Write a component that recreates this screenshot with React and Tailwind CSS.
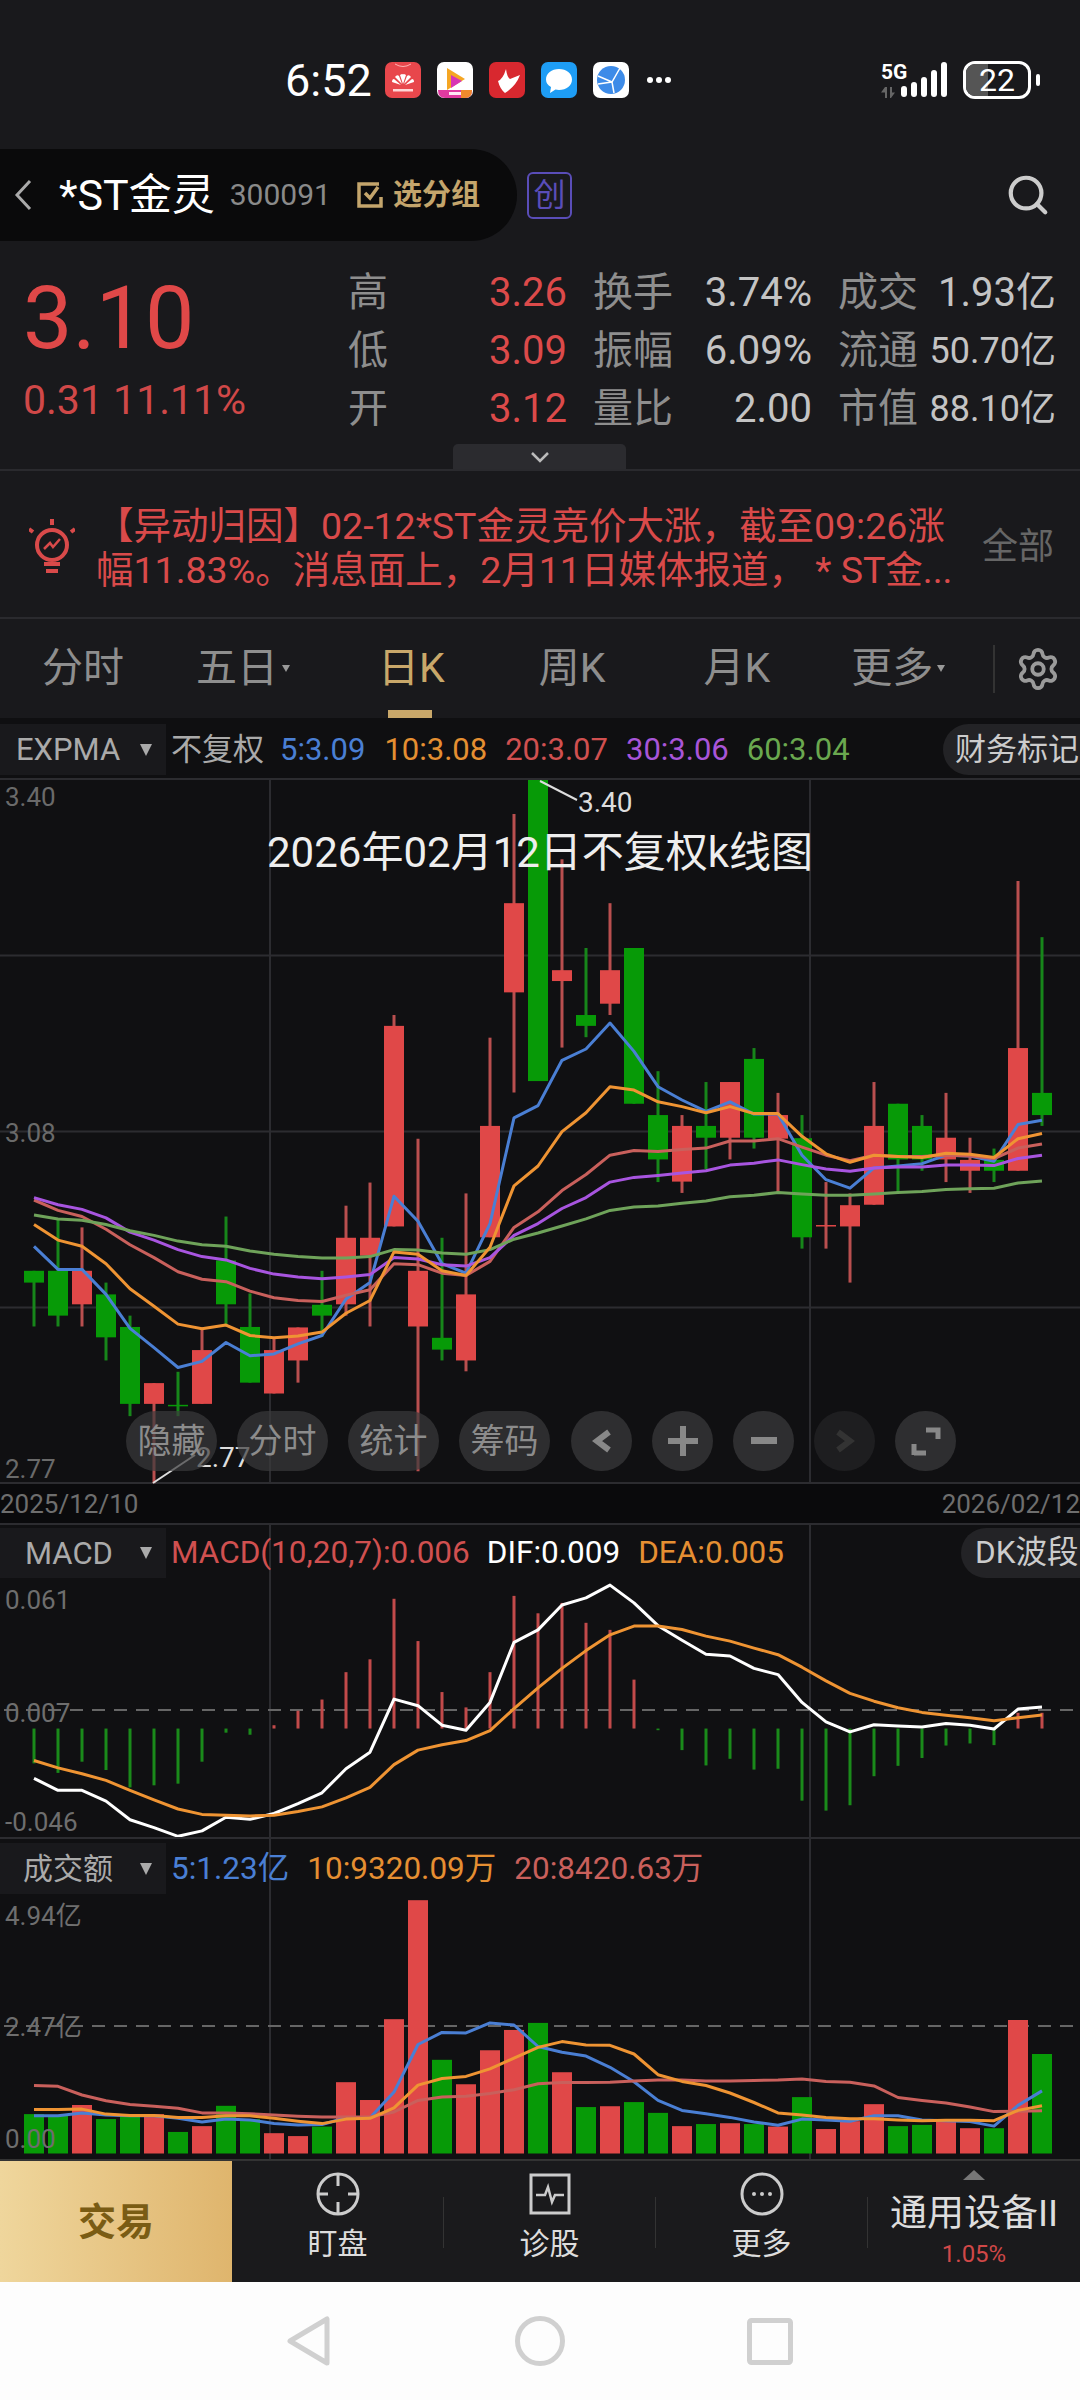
import { Settings, Search } from "lucide-react";

const RED = "#e04848";
const GREEN = "#079a07";
const stepX = (i) => 34 + 24 * i;

// traced from the reference: wick top, body top, body bottom, wick bottom, up?
const candles = [
  [1040, 1040, 1065, 1158, 0], [930, 1040, 1135, 1158, 0], [948, 1040, 1111, 1158, 1], [1065, 1090, 1181, 1230, 0],
  [1135, 1159, 1322, 1348, 0], [1278, 1278, 1322, 1490, 1], [1254, 1324, 1327, 1348, 0], [1160, 1208, 1322, 1322, 1],
  [925, 1018, 1111, 1158, 0], [1088, 1159, 1277, 1277, 0], [1183, 1208, 1300, 1300, 1], [1160, 1160, 1230, 1277, 1],
  [1040, 1112, 1135, 1180, 0], [902, 970, 1111, 1135, 1], [853, 970, 1008, 1158, 1], [498, 521, 946, 946, 1],
  [760, 1040, 1158, 1465, 1], [970, 1182, 1207, 1230, 0], [876, 1090, 1230, 1253, 1], [546, 733, 969, 969, 1],
  [72, 261, 450, 662, 1], [0, 0, 638, 638, 0], [168, 403, 426, 567, 1], [356, 498, 521, 545, 0],
  [261, 403, 474, 498, 1], [356, 356, 686, 686, 0], [617, 710, 804, 852, 0], [710, 733, 851, 875, 1],
  [640, 733, 758, 825, 0], [640, 640, 758, 804, 1], [568, 591, 758, 781, 0], [663, 710, 760, 875, 1],
  [710, 759, 969, 993, 0], [852, 943, 946, 993, 1], [876, 901, 946, 1065, 1], [640, 733, 900, 900, 1],
  [686, 686, 804, 875, 0], [710, 733, 804, 828, 0], [663, 758, 804, 852, 1], [758, 805, 828, 875, 1],
  [781, 805, 828, 852, 0], [214, 568, 828, 828, 1], [333, 663, 710, 733, 0],
];

const kLines = [
  ["#4a7fd4", [988, 1037, 1037, 1090, 1162, 1203, 1245, 1232, 1192, 1220, 1216, 1195, 1177, 1100, 1065, 882, 935, 1025, 1045, 940, 716, 690, 594, 570, 515, 575, 650, 678, 702, 682, 708, 708, 795, 847, 865, 822, 818, 813, 795, 797, 808, 730, 721]],
  ["#c9605c", [890, 912, 925, 952, 985, 1012, 1042, 1058, 1063, 1083, 1097, 1103, 1105, 1092, 1080, 1025, 1027, 1045, 1050, 1020, 948, 915, 870, 836, 795, 785, 787, 783, 780, 765, 765, 760, 778, 795, 807, 795, 798, 798, 795, 797, 802, 780, 771]],
  ["#a855e0", [885, 900, 910, 928, 958, 975, 995, 1010, 1017, 1035, 1047, 1053, 1057, 1053, 1048, 1012, 1015, 1027, 1030, 1012, 965, 940, 908, 885, 852, 842, 838, 833, 828, 816, 812, 805, 815, 824, 829, 822, 820, 820, 816, 816, 817, 802, 795]],
  ["#6fa35a", [922, 930, 933, 942, 955, 965, 977, 985, 988, 998, 1005, 1010, 1013, 1013, 1010, 995, 996, 1002, 1005, 995, 973, 960, 945, 930, 912, 905, 903, 897, 892, 883, 880, 874, 877, 880, 880, 877, 874, 872, 868, 866, 865, 854, 850]],
  ["#ef9433", [942, 975, 988, 1025, 1078, 1115, 1153, 1163, 1155, 1177, 1182, 1178, 1170, 1130, 1103, 1000, 1005, 1040, 1050, 990, 860, 818, 745, 705, 650, 657, 682, 692, 705, 692, 707, 707, 755, 792, 810, 795, 798, 800, 791, 793, 800, 760, 749]],
];

const macdBars = [587, 610, 583, 603, 645, 640, 636, 583, 513, 518, 495, 460, 433, 367, 336, 190, 292, 415, 452, 367, 183, 225, 200, 248, 265, 385, 507, 555, 592, 576, 602, 600, 677, 701, 688, 618, 593, 574, 544, 539, 543, 465, 465];
const dif = [623, 652, 652, 678, 723, 742, 763, 750, 717, 722, 708, 684, 658, 600, 560, 432, 448, 495, 507, 440, 295, 265, 205, 188, 157, 200, 255, 290, 324, 328, 358, 373, 440, 487, 511, 494, 497, 499, 491, 495, 504, 456, 451];
const dea = [580, 598, 612, 628, 652, 675, 697, 710, 712, 714, 712, 703, 692, 670, 645, 590, 555, 542, 532, 508, 455, 405, 358, 315, 277, 256, 256, 264, 280, 292, 309, 325, 355, 388, 418, 437, 453, 464, 471, 477, 484, 477, 470];

const volBars = [1433, 1437, 1411, 1445, 1433, 1433, 1476, 1462, 1413, 1445, 1479, 1486, 1463, 1356, 1399, 1204, 917, 1302, 1361, 1279, 1230, 1213, 1332, 1416, 1414, 1404, 1430, 1462, 1457, 1455, 1457, 1463, 1392, 1469, 1450, 1409, 1462, 1459, 1450, 1467, 1467, 1206, 1288];
const volBlue = [1437, 1437, 1430, 1435, 1437, 1437, 1443, 1452, 1445, 1447, 1456, 1459, 1458, 1442, 1442, 1380, 1265, 1236, 1237, 1213, 1218, 1270, 1284, 1293, 1320, 1355, 1400, 1424, 1432, 1441, 1452, 1460, 1445, 1447, 1450, 1437, 1437, 1447, 1449, 1451, 1462, 1412, 1377];
const volOrange = [1422, 1422, 1421, 1433, 1436, 1436, 1441, 1441, 1437, 1437, 1443, 1450, 1456, 1445, 1443, 1418, 1363, 1347, 1342, 1324, 1298, 1272, 1258, 1266, 1267, 1288, 1338, 1354, 1364, 1382, 1405, 1430, 1435, 1441, 1444, 1444, 1447, 1449, 1448, 1448, 1449, 1424, 1413];
const volRed = [1364, 1366, 1387, 1401, 1410, 1414, 1419, 1430, 1430, 1432, 1435, 1438, 1440, 1440, 1440, 1428, 1400, 1392, 1390, 1383, 1374, 1360, 1357, 1357, 1356, 1353, 1351, 1351, 1353, 1353, 1352, 1351, 1348, 1354, 1356, 1365, 1393, 1400, 1406, 1416, 1427, 1426, 1425];

const kY = (v) => v / 2.119;
const subY = (top) => (v) => v / 2.412 + 1520 - top;
const macdY = subY(1523);
const volY = subY(1837);

function Line({ data, toY, color, width = 3 }) {
  const pts = data.map((v, i) => `${stepX(i)},${toY(v).toFixed(1)}`).join(" ");
  return <polyline points={pts} fill="none" stroke={color} strokeWidth={width} strokeLinejoin="round" />;
}

function Grid({ rows, height }) {
  return (
    <g stroke="#2c2c30" strokeWidth="2">
      {rows.map((y) => <line key={y} x1="0" x2="1080" y1={y} y2={y} />)}
      <line x1="270" x2="270" y1="0" y2={height} />
      <line x1="810" x2="810" y1="0" y2={height} />
    </g>
  );
}

function AppIcons() {
  return (
    <div className="ml-[13px] flex items-center gap-[16px]">
      <svg width="36" height="36" viewBox="0 0 36 36">
        <rect width="36" height="36" rx="7" fill="#e8474c" />
        <path d="M10 2q8 5 16 0" fill="none" stroke="#ffb3b3" strokeWidth="1" />
        <g fill="#fff">
          <path d="M18 22l-3-9q3-2 3 0z" />
          <path d="M18 22l3-9q-3-2-3 0z" />
          <path d="M17 22l-7-7q2-3 4-1z" />
          <path d="M19 22l7-7q-2-3-4-1z" />
          <path d="M16 23l-9-3q0-3 2-3z" />
          <path d="M20 23l9-3q0-3-2-3z" />
        </g>
        <rect x="8" y="27" width="20" height="2.5" fill="#ffd6d6" />
      </svg>
      <svg width="36" height="36" viewBox="0 0 36 36">
        <rect width="36" height="36" rx="7" fill="#fff" />
        <path d="M10 6l18 11-18 11z" fill="#f5a623" />
        <path d="M14 13l11 6-11 7z" fill="#d835b4" />
        <path d="M1 28h34q0 8-7 8H8q-7 0-7-8z" fill="#e03aa0" />
        <path d="M24 28h11q0 8-7 8h-4z" fill="#f08a2c" />
        <rect x="12" y="30" width="12" height="3" fill="#ffe7f5" />
      </svg>
      <svg width="36" height="36" viewBox="0 0 36 36">
        <rect width="36" height="36" rx="7" fill="#d8282f" />
        <path d="M9 19q5-2 8-12 1 8 4 10l10-4q-4 11-15 18-5-4-7-12z" fill="#fff" />
      </svg>
      <svg width="36" height="36" viewBox="0 0 36 36">
        <rect width="36" height="36" rx="7" fill="#1e9df5" />
        <path d="M18 7c7.500 0 13 4.500 13 10.500S25.500 28 18 28q-2 0-3.500-.4L9 31l1-6q-5-3-5-7.500C5 11.500 10.500 7 18 7z" fill="#fff" />
      </svg>
      <svg width="36" height="36" viewBox="0 0 36 36">
        <rect width="36" height="36" rx="7" fill="#fff" />
        <circle cx="18" cy="18" r="14" fill="#3d8be8" />
        <path d="M5 14l14 6 8-14M19 20l2 11M5 22l14-2" fill="none" stroke="#fff" strokeWidth="1.500" />
      </svg>
    </div>
  );
}

function StatusBar() {
  return (
    <div className="h-[149px] pt-[60px] flex items-start shrink-0">
      <div className="ml-[285px] h-[40px] flex items-center">
        <span className="text-[45px] leading-none text-white">6:52</span>
        <AppIcons />
        <span className="ml-[18px] flex gap-[3px]">
          <i className="w-[6px] h-[6px] rounded-full bg-white" />
          <i className="w-[6px] h-[6px] rounded-full bg-white" />
          <i className="w-[6px] h-[6px] rounded-full bg-white" />
        </span>
      </div>
      <div className="ml-auto mr-[40px] h-[40px] flex items-center">
        <div className="relative w-[30px] h-[38px]">
          <span className="absolute left-[6px] top-[1px] text-[21px] leading-[20px] font-bold text-white">5G</span>
          <svg className="absolute left-[6px] top-[26px]" width="16" height="11" viewBox="0 0 16 11" fill="#666">
            <path d="M0 5.500L4 0h2v11H4V5.500zM9 0h2v5.500h3L10 11H9z" />
          </svg>
        </div>
        <svg className="ml-[-4px]" width="46" height="38" viewBox="0 0 46 38" fill="#fff">
          <rect x="0" y="25" width="6" height="11" rx="3" />
          <rect x="10" y="21" width="6" height="15" rx="3" />
          <rect x="20" y="16" width="6" height="20" rx="3" />
          <rect x="30" y="9" width="6" height="27" rx="3" />
          <rect x="40" y="1" width="6" height="35" rx="3" />
        </svg>
        <div className="relative ml-[16px] w-[68px] h-[38px] rounded-[12px] border-[3px] border-white overflow-hidden flex items-center justify-center">
          <div className="absolute left-0 top-0 h-full w-[22px] bg-[#555]" />
          <span className="relative text-[32px] leading-none text-white">22</span>
        </div>
        <div className="ml-[5px] w-[4px] h-[12px] rounded-full bg-white" />
      </div>
    </div>
  );
}

function TitleBar() {
  return (
    <div className="h-[92px] flex items-center shrink-0">
      <div className="w-[517px] h-full bg-[#0a0a0b] rounded-r-[46px] flex items-center">
        <svg className="ml-[13px]" width="20" height="34" viewBox="0 0 20 34" fill="none" stroke="#aaa" strokeWidth="3">
          <path d="M17 3L4 17l13 14" />
        </svg>
        <span className="ml-[26px] text-[43px] leading-none text-white">*ST金灵</span>
        <span className="ml-[15px] text-[30px] leading-none text-[#8a8a8a]">300091</span>
        <svg className="ml-[26px]" width="26" height="26" viewBox="0 0 26 26" fill="none" stroke="#c4a56c" strokeWidth="3.500">
          <path d="M22 2H2v22h22v-9" />
          <path d="M8 11l5 5 8-11" />
        </svg>
        <span className="ml-[10px] text-[29px] leading-none font-bold text-[#c4a56c]">选分组</span>
      </div>
      <div className="ml-[10px] w-[45px] h-[47px] rounded-[6px] border-2 border-[#5a4db8] flex items-center justify-center text-[32px] leading-none text-[#5a4db8]">创</div>
      <Search className="ml-auto mr-[29px]" size={46} strokeWidth={2.2} color="#ccc" />
    </div>
  );
}

const quoteRows = [
  ["高", "3.26", "换手", "3.74%", "成交", "1.93亿"],
  ["低", "3.09", "振幅", "6.09%", "流通", "50.70亿"],
  ["开", "3.12", "量比", "2.00", "市值", "88.10亿"],
];

function QuoteCell({ label, value, red, tight }) {
  return (
    <div className="h-[58px] flex items-center justify-between">
      <span className="text-[#8e8e8e]">{label}</span>
      <span className={red ? "text-[#dc4a4a]" : tight ? "text-[#c4c4c4] text-[36px]" : "text-[#c4c4c4]"}>{value}</span>
    </div>
  );
}

function Quote() {
  return (
    <div className="relative h-[230px] flex shrink-0 border-b-2 border-[#2a2a2e]">
      <div className="w-[348px] pl-[23px] pt-[33px]">
        <div className="text-[88px] leading-[88px] text-[#e04848]">3.10</div>
        <div className="mt-[16px] text-[41px] leading-[44px] text-[#d04848]">0.31 11.11%</div>
      </div>
      <div className="pt-[23px] grid grid-cols-[219px_219px_218px] gap-x-[26px] text-[40px] leading-none h-fit">
        {quoteRows.map((r, i) => [
          <QuoteCell key={r[0]} label={r[0]} value={r[1]} red />,
          <QuoteCell key={r[2]} label={r[2]} value={r[3]} />,
          <QuoteCell key={r[4]} label={r[4]} value={r[5]} tight={i > 0} />,
        ])}
      </div>
      <div className="absolute left-[453px] bottom-0 w-[173px] h-[25px] rounded-t-[5px] bg-[#2b2b2f] flex items-center justify-center">
        <svg width="20" height="12" viewBox="0 0 20 12" fill="none" stroke="#bbb" strokeWidth="2.500">
          <path d="M2 2l8 8 8-8" />
        </svg>
      </div>
    </div>
  );
}

function Notice() {
  return (
    <div className="h-[148px] pt-[5px] flex items-center shrink-0 border-b-2 border-[#2a2a2e]">
      <svg className="ml-[29px] shrink-0" width="46" height="58" viewBox="0 0 46 58" fill="none" stroke="#d94a4a" strokeWidth="4">
        <circle cx="23" cy="27" r="15" />
        <path d="M4 14L0 11M42 14l4-3M23 7V1M15 46h16M17 53h12" />
        <path d="M15 31l6-6 3 4 7-8" strokeWidth="2.500" />
      </svg>
      <div className="ml-[21px] w-[858px] pt-[2px] text-[37.5px] leading-[44px] text-[#d94a4a] whitespace-nowrap">
        <div>【异动归因】02-12*ST金灵竞价大涨，截至09:26涨</div>
        <div>幅11.83%。消息面上，2月11日媒体报道， * ST金...</div>
      </div>
      <span className="ml-[28px] text-[36px] leading-none text-[#666]">全部</span>
    </div>
  );
}

function Caret() {
  return <i className="ml-[4px] w-0 h-0 border-x-[4px] border-t-[7px] border-x-transparent border-t-[#999]" />;
}

function Tabs() {
  return (
    <div className="relative h-[99px] flex items-center shrink-0 pl-[42px] text-[41px] leading-none text-[#8e8e8e]">
      <span>分时</span>
      <span className="ml-[72px] flex items-center">五日<Caret /></span>
      <span className="ml-[88px] text-[#c9a86a]">日K</span>
      <span className="ml-[94px]">周K</span>
      <span className="ml-[98px]">月K</span>
      <span className="ml-[81px] flex items-center">更多<Caret /></span>
      <i className="ml-[48px] w-[2px] h-[48px] bg-[#333]" />
      <Settings className="ml-[20px]" size={46} strokeWidth={2} color="#9a9a9a" />
      <i className="absolute left-[388px] bottom-0 w-[44px] h-[8px] bg-[#c9a86a]" />
    </div>
  );
}

function IndicatorTag({ children }) {
  return (
    <div className="w-[166px] h-[51px] bg-[#19191c] flex items-center justify-between pl-[16px] pr-[14px] text-[#aaa] shrink-0">
      <span>{children}</span>
      <i className="w-0 h-0 border-x-[6px] border-t-[12px] border-x-transparent border-t-[#aaa]" />
    </div>
  );
}

function IndicatorRow() {
  return (
    <div className="h-[62px] pt-[6px] bg-[#0f0f11] flex shrink-0 text-[31px] leading-none whitespace-nowrap border-b-2 border-[#2c2c30]">
      <IndicatorTag>EXPMA</IndicatorTag>
      <div className="ml-[5px] h-[51px] flex items-center">
        <span className="text-[#aaa]">不复权</span>
        <span className="ml-[16px] text-[#4a7fd4]">5:3.09</span>
        <span className="ml-[19px] text-[#e58f32]">10:3.08</span>
        <span className="ml-[18px] text-[#d05050]">20:3.07</span>
        <span className="ml-[18px] text-[#a855d8]">30:3.06</span>
        <span className="ml-[18px] text-[#6aa84f]">60:3.04</span>
      </div>
      <div className="ml-auto w-[137px] h-[51px] rounded-l-[26px] bg-[#232326] flex items-center pl-[12px] text-[#ccc]">财务标记</div>
    </div>
  );
}

function RoundButton({ dim, children }) {
  return (
    <div className={`w-[61px] h-[60px] rounded-full flex items-center justify-center ${dim ? "bg-[#1e1e20]" : "bg-[#2e2e30]"}`}>
      {children}
    </div>
  );
}

function ToolPill({ children }) {
  return (
    <div className="w-[91px] h-[60px] rounded-full bg-[#3a3a3c]/70 flex items-center justify-center text-[34px] leading-none text-[#8c8c8c]">
      {children}
    </div>
  );
}

function KChart() {
  return (
    <div className="relative h-[704px] bg-[#101012] shrink-0 overflow-hidden">
      <svg className="absolute inset-0" width="1080" height="704" viewBox="0 0 1080 704">
        <Grid rows={[175.5, 351.5, 527.500, 703]} height={704} />
        {candles.map(([wt, bt, bb, wb, up], i) => {
          const x = stepX(i);
          return (
            <g key={i}>
              <line x1={x} x2={x} y1={kY(wt)} y2={kY(wb)} stroke={up ? "#b94f4f" : "#17861a"} strokeWidth="3" />
              <rect x={x - 10} y={kY(bt)} width="20" height={Math.max(kY(bb) - kY(bt), 1.5)} fill={up ? RED : GREEN} />
            </g>
          );
        })}
        {kLines.map(([color, data]) => <Line key={color} data={data} toY={kY} color={color} />)}
        <path d="M540 1L577 20" stroke="#ddd" strokeWidth="2" fill="none" />
        <path d="M153 703L195 675" stroke="#ddd" strokeWidth="2" fill="none" />
      </svg>
      <span className="absolute left-[5px] top-[3px] text-[26px] leading-[28px] text-[#6a6a6a]">3.40</span>
      <span className="absolute left-[5px] top-[339px] text-[26px] leading-[28px] text-[#6a6a6a]">3.08</span>
      <span className="absolute left-[5px] top-[675px] text-[26px] leading-[28px] text-[#6a6a6a]">2.77</span>
      <span className="absolute left-[578px] top-[9px] text-[28px] leading-[28px] text-[#ddd]">3.40</span>
      <span className="absolute left-[196px] top-[664px] text-[28px] leading-[28px] text-[#ddd]">2.77</span>
      <span className="absolute left-[267px] top-[50px] text-[42px] leading-[46px] text-[#eee] whitespace-nowrap">2026年02月12日不复权k线图</span>
      <div className="absolute left-[126px] top-[631px] flex gap-[20px]">
        <ToolPill>隐藏</ToolPill>
        <ToolPill>分时</ToolPill>
        <ToolPill>统计</ToolPill>
        <ToolPill>筹码</ToolPill>
        <div className="ml-[1px] flex gap-[20px]">
          <RoundButton>
            <svg width="22" height="24" viewBox="0 0 22 24" fill="none" stroke="#888" strokeWidth="6"><path d="M18 3L6 12l12 9" /></svg>
          </RoundButton>
          <RoundButton>
            <svg width="30" height="30" viewBox="0 0 30 30" fill="none" stroke="#888" strokeWidth="6"><path d="M0 15h30M15 0v30" /></svg>
          </RoundButton>
          <RoundButton>
            <svg width="26" height="8" viewBox="0 0 26 8" fill="#888"><rect width="26" height="7" /></svg>
          </RoundButton>
          <RoundButton dim>
            <svg width="22" height="24" viewBox="0 0 22 24" fill="none" stroke="#333" strokeWidth="6"><path d="M4 3l12 9-12 9" /></svg>
          </RoundButton>
          <RoundButton>
            <svg width="30" height="30" viewBox="0 0 30 30" fill="none" stroke="#888" strokeWidth="5"><path d="M15 4h12v9M3 29v-11M3 27h12" /></svg>
          </RoundButton>
        </div>
      </div>
    </div>
  );
}

function DateRow() {
  return (
    <div className="h-[39px] pt-[1px] bg-[#0a0a0c] flex items-center justify-between text-[26px] leading-none text-[#6e6e6e] shrink-0">
      <span>2025/12/10</span>
      <span>2026/02/12</span>
    </div>
  );
}

function MacdPanel() {
  const base = macdY(503);
  return (
    <div className="relative h-[314px] bg-[#101012] shrink-0 border-t-2 border-[#2c2c30]">
      <svg className="absolute left-0 top-[-2px]" width="1080" height="314" viewBox="0 0 1080 314">
        <Grid rows={[]} height={314} />
        <line x1="4" x2="1080" y1="187" y2="187" stroke="#666" strokeWidth="2" strokeDasharray="13 9" />
        {macdBars.map((v, i) => (
          <line key={i} x1={stepX(i)} x2={stepX(i)} y1={base} y2={macdY(v)} stroke={i >= 10 && i <= 25 || i >= 41 ? "#c24a4a" : "#1a8a1a"} strokeWidth="3" />
        ))}
        <Line data={dif} toY={macdY} color="#fff" />
        <Line data={dea} toY={macdY} color="#ef9433" />
      </svg>
      <div className="relative pt-[3px] flex text-[31.5px] leading-none whitespace-nowrap">
        <div className="w-[166px] h-[50px] bg-[#19191c] flex items-center justify-between pl-[25px] pr-[14px] text-[#aaa] text-[31px]">
          <span>MACD</span>
          <i className="w-0 h-0 border-x-[6px] border-t-[12px] border-x-transparent border-t-[#aaa]" />
        </div>
        <div className="ml-[5px] h-[50px] flex items-center">
          <span className="text-[#d05050]">MACD(10,20,7):0.006</span>
          <span className="ml-[17px] text-white">DIF:0.009</span>
          <span className="ml-[18px] text-[#e58f32]">DEA:0.005</span>
        </div>
        <div className="ml-auto w-[119px] h-[50px] rounded-l-[25px] bg-[#232326] flex items-center pl-[14px] text-[#ccc]">DK波段</div>
      </div>
      <span className="absolute left-[5px] top-[61px] text-[26px] leading-[28px] text-[#6e6e6e]">0.061</span>
      <span className="absolute left-[5px] top-[174px] text-[26px] leading-[28px] text-[#6e6e6e]">0.007</span>
      <span className="absolute left-[5px] top-[283px] text-[26px] leading-[28px] text-[#6e6e6e]">-0.046</span>
    </div>
  );
}

function VolumePanel() {
  const base = volY(1528);
  return (
    <div className="relative h-[322px] bg-[#101012] shrink-0 border-t-2 border-[#2c2c30]">
      <svg className="absolute left-0 top-[-2px]" width="1080" height="322" viewBox="0 0 1080 322">
        <Grid rows={[]} height={322} />
        <line x1="4" x2="1080" y1="189" y2="189" stroke="#666" strokeWidth="2" strokeDasharray="13 9" />
        {volBars.map((v, i) => (
          <rect key={i} x={stepX(i) - 10} y={volY(v)} width="20" height={base - volY(v)} fill={candles[i][4] ? RED : GREEN} />
        ))}
        <Line data={volBlue} toY={volY} color="#4a7fd4" />
        <Line data={volRed} toY={volY} color="#c9605c" />
        <Line data={volOrange} toY={volY} color="#ef9433" />
      </svg>
      <div className="relative pt-[4px] flex text-[31.5px] leading-none whitespace-nowrap">
        <div className="w-[166px] h-[51px] bg-[#19191c] flex items-center justify-between pl-[23px] pr-[14px] text-[#aaa] text-[30px]">
          <span>成交额</span>
          <i className="w-0 h-0 border-x-[6px] border-t-[12px] border-x-transparent border-t-[#aaa]" />
        </div>
        <div className="ml-[5px] h-[51px] flex items-center">
          <span className="text-[#4a7fd4]">5:1.23亿</span>
          <span className="ml-[18px] text-[#e58f32]">10:9320.09万</span>
          <span className="ml-[18px] text-[#c9605c]">20:8420.63万</span>
        </div>
      </div>
      <span className="absolute left-[5px] top-[63px] text-[26px] leading-[28px] text-[#6e6e6e]">4.94亿</span>
      <span className="absolute left-[5px] top-[174px] text-[26px] leading-[28px] text-[#6e6e6e]">2.47亿</span>
      <span className="absolute left-[5px] top-[286px] text-[26px] leading-[28px] text-[#6e6e6e]">0.00</span>
    </div>
  );
}

function NavItem({ label, children }) {
  return (
    <div className="w-[211px] h-full flex flex-col items-center pt-[11px] text-[30px] leading-none text-[#ddd]">
      {children}
      <span className="mt-[13px]">{label}</span>
    </div>
  );
}

function NavDivider() {
  return <i className="w-[1px] h-[51px] bg-[#333] shrink-0 mt-[36px]" />;
}

function BottomNav() {
  return (
    <div className="h-[123px] bg-[#1a1a1c] flex shrink-0 border-t-2 border-[#333]">
      <div className="w-[232px] h-full bg-gradient-to-r from-[#efd69c] to-[#dfb56d] flex items-center justify-center text-[38px] leading-none font-bold text-[#7a5c14] shrink-0">交易</div>
      <div className="flex">
        <NavItem label="盯盘">
          <svg width="44" height="44" viewBox="0 0 44 44" fill="none" stroke="#ccc" strokeWidth="3">
            <circle cx="22" cy="22" r="20" />
            <path d="M22 2v12M22 30v12M2 22h10M32 22h10" />
          </svg>
        </NavItem>
        <NavDivider />
        <NavItem label="诊股">
          <svg width="44" height="44" viewBox="0 0 44 44" fill="none" stroke="#ccc" strokeWidth="3">
            <rect x="3" y="3" width="38" height="38" />
            <path d="M8 23h9l3-8 4 15 3-7h9" strokeWidth="2.500" />
          </svg>
        </NavItem>
        <NavDivider />
        <NavItem label="更多">
          <svg width="44" height="44" viewBox="0 0 44 44" fill="#ccc" stroke="none">
            <circle cx="22" cy="22" r="20" fill="none" stroke="#ccc" strokeWidth="3" />
            <circle cx="14" cy="22" r="2" />
            <circle cx="22" cy="22" r="2" />
            <circle cx="30" cy="22" r="2" />
          </svg>
        </NavItem>
        <NavDivider />
        <div className="w-[212px] flex flex-col items-center pt-[9px]">
          <i className="w-0 h-0 border-x-[11px] border-b-[10px] border-x-transparent border-b-[#777]" />
          <span className="mt-[14px] text-[37px] leading-[40px] text-[#ddd] whitespace-nowrap">通用设备II</span>
          <span className="mt-[8px] text-[24px] leading-none text-[#d04848]">1.05%</span>
        </div>
      </div>
    </div>
  );
}

function SystemBar() {
  return (
    <div className="flex-1 bg-[#fdfdfd] flex items-center justify-center">
      <svg width="44" height="50" viewBox="0 0 44 50" fill="none" stroke="#d0d0d0" strokeWidth="5" strokeLinejoin="round">
        <path d="M40 3v44L3 25z" />
      </svg>
      <svg className="ml-[184px]" width="50" height="50" viewBox="0 0 50 50" fill="none" stroke="#d0d0d0" strokeWidth="5">
        <circle cx="25" cy="25" r="22.500" />
      </svg>
      <svg className="ml-[182px]" width="46" height="47" viewBox="0 0 46 47" fill="none" stroke="#d0d0d0" strokeWidth="5">
        <rect x="2.500" y="2.500" width="41" height="42" rx="2" />
      </svg>
    </div>
  );
}

export default function App() {
  return (
    <div className="w-[1080px] h-[2400px] bg-[#19191c] flex flex-col overflow-hidden [font-family:Roboto,'Noto_Sans_CJK_SC',sans-serif]">
      <StatusBar />
      <TitleBar />
      <Quote />
      <Notice />
      <Tabs />
      <IndicatorRow />
      <KChart />
      <DateRow />
      <MacdPanel />
      <VolumePanel />
      <BottomNav />
      <SystemBar />
    </div>
  );
}
